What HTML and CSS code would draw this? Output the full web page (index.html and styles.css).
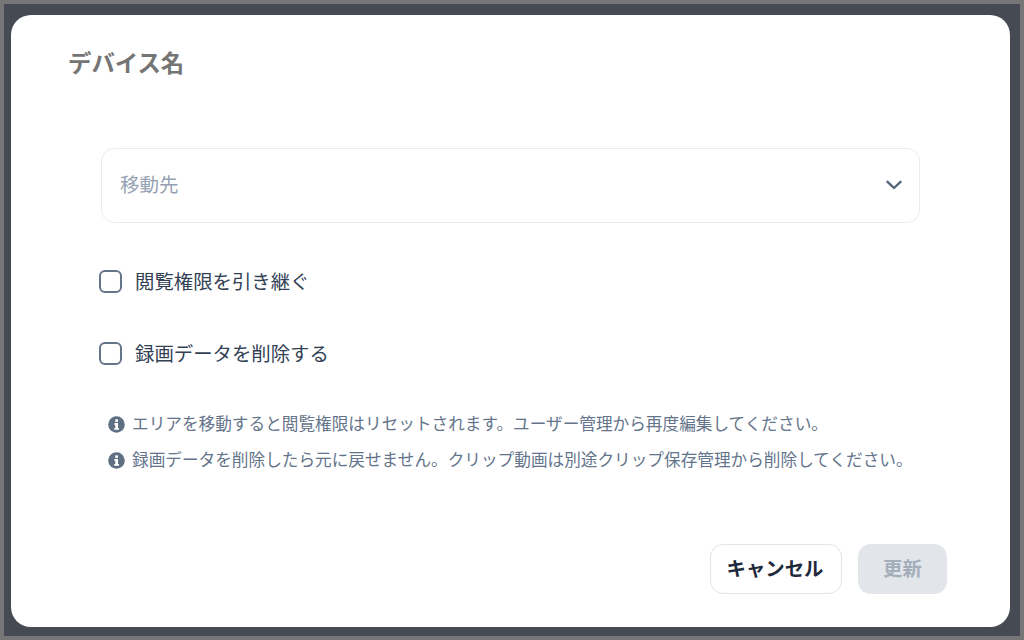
FILE: index.html
```html
<!DOCTYPE html>
<html lang="ja">
<head>
    <meta charset="UTF-8">
    <title>デバイス名</title>
    <link rel="stylesheet" href="styles.css">
</head>
<body>
    <div class="overlay">
        <div class="modal">
            <h1 class="modal-title">デバイス名</h1>

            <div class="modal-body">
                <div class="select">
                    <span class="select-placeholder">移動先</span>
                    <svg class="select-arrow" width="16" height="10" viewBox="0 0 16 10" fill="none">
                        <path d="M1.5 1.8 L8 8 L14.5 1.8" stroke="#56657a" stroke-width="2.4" stroke-linecap="round" stroke-linejoin="round"/>
                    </svg>
                </div>

                <label class="check-row">
                    <span class="checkbox"></span>
                    <span class="check-label">閲覧権限を引き継ぐ</span>
                </label>
                <label class="check-row">
                    <span class="checkbox"></span>
                    <span class="check-label">録画データを削除する</span>
                </label>

                <div class="notes">
                    <div class="note">
                        <svg class="note-icon" width="17" height="17" viewBox="0 0 17 17">
                            <circle cx="8.5" cy="8.5" r="8.3" fill="#5f7085"/>
                            <rect x="7.2" y="3.3" width="2.8" height="2.6" rx="0.6" fill="#fff"/>
                            <path d="M6.4 7.1 H10 V12 H11 V13.8 H6.2 V12 H7.3 V8.9 H6.4 Z" fill="#fff"/>
                        </svg>
                        <span>エリアを移動すると閲覧権限はリセットされます。ユーザー管理から再度編集してください。</span>
                    </div>
                    <div class="note">
                        <svg class="note-icon" width="17" height="17" viewBox="0 0 17 17">
                            <circle cx="8.5" cy="8.5" r="8.3" fill="#5f7085"/>
                            <rect x="7.2" y="3.3" width="2.8" height="2.6" rx="0.6" fill="#fff"/>
                            <path d="M6.4 7.1 H10 V12 H11 V13.8 H6.2 V12 H7.3 V8.9 H6.4 Z" fill="#fff"/>
                        </svg>
                        <span>録画データを削除したら元に戻せません。クリップ動画は別途クリップ保存管理から削除してください。</span>
                    </div>
                </div>
            </div>

            <div class="modal-footer">
                <button class="btn btn-cancel">キャンセル</button>
                <button class="btn btn-update" disabled>更新</button>
            </div>
        </div>
    </div>
</body>
</html>
```

FILE: styles.css
```css
* {
    box-sizing: border-box;
}

body {
    margin: 0;
    overflow: hidden;
    font-family: "Inter", "Noto Sans CJK JP", sans-serif;
}

.overlay {
    display: flex;
    flex-direction: column;
    height: 640px;
    padding: 10.5px 10px 9px 7px;
    background-color: #464a53;
    border: 4px solid #757675;
}

.modal {
    display: flex;
    flex-direction: column;
    flex: 1;
    background-color: #fff;
    border-radius: 20px;
    padding: 0 63px 0 57px;
}

.modal-title {
    margin: 32px 0 0;
    font-size: 23.4px;
    line-height: 34px;
    font-weight: 700;
    color: #757575;
}

.modal-body {
    padding: 0 27px 0 33px;
    margin-top: 67px;
}

.select {
    display: flex;
    align-items: center;
    justify-content: space-between;
    height: 75px;
    padding: 0 17px 0 18px;
    border: 1px solid #e9ecef;
    border-radius: 13px;
}

.select-placeholder {
    margin-top: -4px;
    font-size: 19.5px;
    color: #95a2b3;
}

.select-arrow {
    display: block;
}

.check-row {
    display: flex;
    align-items: center;
    gap: 13px;
    height: 36px;
    margin-top: 36px;
    margin-left: -2px;
    color: #334155;
    font-size: 19.4px;
}

.check-row:first-of-type {
    margin-top: 41px;
}

.check-label {
    margin-top: -2px;
}

.checkbox {
    width: 23px;
    height: 23px;
    border: 2px solid #64758b;
    border-radius: 6px;
    background-color: #fff;
}

.notes {
    margin-top: 33px;
    padding-left: 7px;
}

.note {
    display: flex;
    align-items: center;
    gap: 7px;
    height: 36px;
    font-size: 16.65px;
    color: #64748b;
    white-space: nowrap;
}

.note-icon {
    flex-shrink: 0;
    margin-top: 3px;
}

.modal-footer {
    display: flex;
    justify-content: flex-end;
    align-items: center;
    gap: 16px;
    margin-top: 67px;
}

.btn {
    height: 50px;
    padding: 0 0 2px;
    border-radius: 13px;
    font-family: inherit;
    font-size: 19.4px;
    font-weight: 700;
}

.btn-cancel {
    width: 132px;
    padding-right: 2px;
    color: #1e293b;
    background-color: #fff;
    border: 1px solid #e2e5e9;
}

.btn-update {
    width: 89px;
    color: #a3aebb;
    background-color: #e2e6ea;
    border: none;
}
```
